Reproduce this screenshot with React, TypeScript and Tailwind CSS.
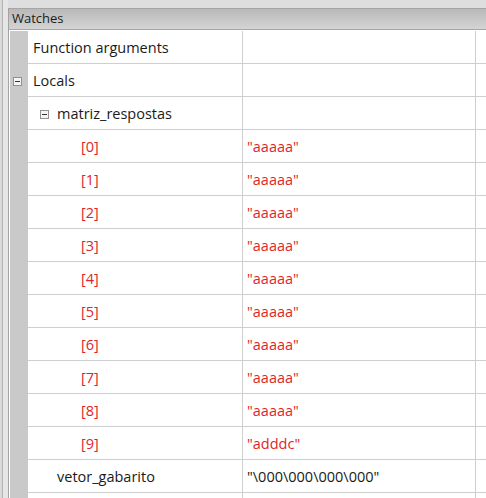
import React from "react";

type Row = { name: string; value?: string; indent: number; toggle?: boolean; red?: boolean };

const rows: Row[] = [
  { name: "Function arguments", indent: 0 },
  { name: "Locals", indent: 0, toggle: true },
  { name: "matriz_respostas", indent: 1, toggle: true },
  ...["0", "1", "2", "3", "4", "5", "6", "7", "8"].map((i) => ({ name: `[${i}]`, value: '"aaaaa"', indent: 2, red: true })),
  { name: "[9]", value: '"adddc"', indent: 2, red: true },
  { name: "vetor_gabarito", value: '"\\000\\000\\000\\000"', indent: 1 },
  { name: "", indent: 1 },
];

function Minus() {
  return (
    <span className="flex h-[9px] w-[9px] items-center justify-center border border-[#919191] bg-[#f4f4f4]">
      <span className="h-px w-[5px] bg-[#333]" />
    </span>
  );
}

export default function App() {
  return (
    <div className="flex h-[498px] w-[486px] overflow-hidden bg-[#dedede] font-['Segoe_UI','Open_Sans',sans-serif] text-[14.5px] text-[#1a1a1a]">
      <div className="w-[2px] bg-[#d9d9d9]" />
      <div className="w-px bg-[#b4b4b4]" />
      <div className="w-[5px] bg-[#e6e6e6]" />
      <div className="mt-[8px] flex flex-1 flex-col border-l border-[#a3a3a3]">
        <div className="flex h-[23px] items-center border-t border-b border-[#a6a6a6] bg-gradient-to-b from-[#b9b9b9] to-[#d4d4d4] pl-[3px] text-[13px] text-[#1c1c1c]">
          Watches
        </div>
        <div className="flex flex-1 flex-col bg-white pt-px">
          {rows.map((r, i) => (
            <div key={i} className="flex h-[33px] shrink-0">
              <div className="flex w-[19px] items-center border-l border-white bg-[#c9c9c9] pl-[3px] pt-[3px]">
                {r.toggle && r.indent === 0 ? <Minus /> : null}
              </div>
              <div className="flex w-[214px] items-center border-b border-[#cfcfcf] pt-[3px]">
                {r.indent === 1 ? (
                  <span className="flex w-[29px] items-center justify-end pr-[8px]">{r.toggle ? <Minus /> : null}</span>
                ) : r.indent === 2 ? (
                  <span className="w-[53px]" />
                ) : (
                  <span className="w-[5px]" />
                )}
                <span className={r.red ? "text-[#e0262b]" : ""}>{r.name}</span>
              </div>
              <div className="flex w-[233px] items-center border-l border-b border-[#cfcfcf] pl-[4px] pt-[3px]">
                <span className={r.red ? "text-[#e0262b]" : ""}>{r.value}</span>
              </div>
              <div className="flex-1 border-l border-b border-[#cfcfcf]" />
            </div>
          ))}
        </div>
      </div>
    </div>
  );
}
